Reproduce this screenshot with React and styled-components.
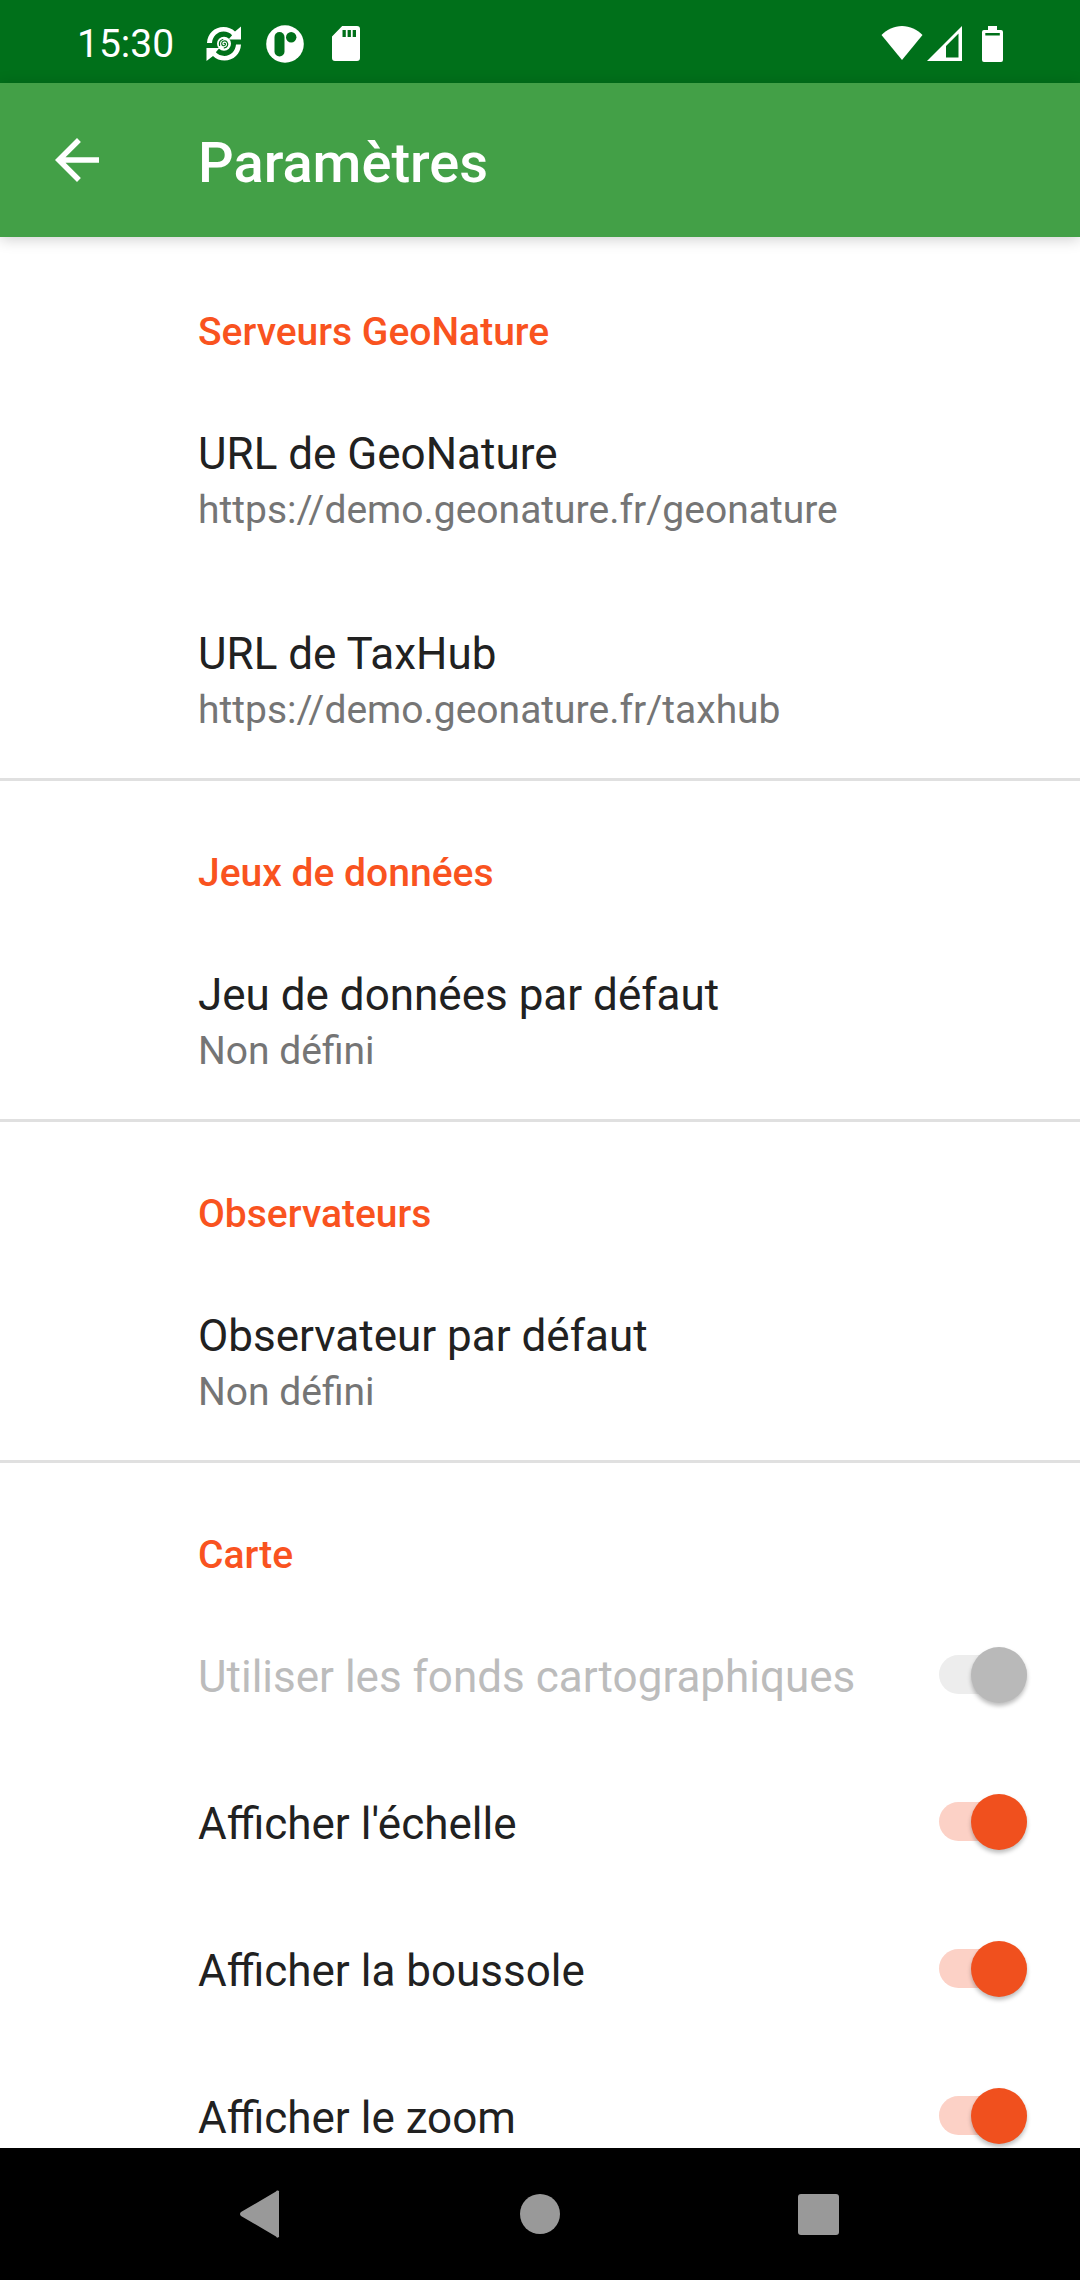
import React from "react";
import styled, { createGlobalStyle } from "styled-components";

const GlobalStyle = createGlobalStyle`
  * { box-sizing: border-box; }
  body { margin: 0; background: #fff; }
  button, input { font: inherit; margin: 0; }
`;

const Screen = styled.div`
  display: flex;
  flex-direction: column;
  height: 100vh;
  font-family: Roboto, "Liberation Sans", sans-serif;
  color: #212121;
`;

const StatusBar = styled.div`
  display: flex;
  flex: none;
  align-items: center;
  justify-content: space-between;
  height: 83px;
  padding: 4px 77px 0 77px;
  background: #00701a;
  color: #fff;
`;

const StatusGroup = styled.div`
  display: flex;
  align-items: center;
  gap: ${(p) => p.$gap};
`;

const Clock = styled.time`
  font-size: 39px;
  line-height: 46px;
  margin-right: 8px;
`;

const StatusIcon = styled.svg`
  display: block;
  fill: #fff;
`;

const AppBar = styled.header`
  display: flex;
  flex: none;
  align-items: center;
  height: 154px;
  padding: 0 44px;
  background: #43a047;
  color: #fff;
  box-shadow: 0 2px 14px rgba(0, 0, 0, 0.2);
`;

const BackButton = styled.button`
  width: 66px;
  height: 66px;
  padding: 0;
  border: 0;
  background: none;
  color: inherit;
`;

const Title = styled.h1`
  margin: 0 0 0 88px;
  padding-top: 6px;
  font-size: 56px;
  line-height: 64px;
  font-weight: 500;
`;

const Content = styled.main`
  flex: 1;
  min-height: 0;
  overflow-y: auto;
  scrollbar-width: none;
`;

const Section = styled.section`
  & + & { box-shadow: inset 0 3px #e0e0e0; }
`;

const SectionTitle = styled.h2`
  margin: 0;
  padding: 69px 44px 19px 198px;
  font-size: 39px;
  line-height: 53px;
  font-weight: 500;
  color: #f9531f;
`;

const Preference = styled.button`
  display: block;
  width: 100%;
  padding: 47px 44px 41px 198px;
  border: 0;
  background: none;
  color: inherit;
  text-align: left;
`;

const SwitchPreference = styled.label`
  display: flex;
  align-items: center;
  justify-content: space-between;
  padding: 0 53px 0 198px;
  color: ${(p) => (p.$disabled ? "#bcbcbc" : "inherit")};
`;

const Name = styled.span`
  display: block;
  font-size: 44px;
  line-height: 59px;

  ${SwitchPreference} & { padding: 47px 0 41px; }
`;

const Summary = styled.span`
  display: block;
  font-size: 39px;
  line-height: 53px;
  color: #757575;
`;

const Switch = styled.input`
  appearance: none;
  display: grid;
  flex: none;
  grid-template-rows: 39px;
  align-items: center;
  justify-content: start;
  width: 88px;
  height: 39px;
  border-radius: 20px;
  background: #e0e0e0;

  &::before {
    content: "";
    width: 56px;
    height: 56px;
    border-radius: 50%;
    background: #fafafa;
    box-shadow: 0 3px 4px rgba(0, 0, 0, 0.26);
  }
  &:checked { justify-content: end; background: #fcd1c6; }
  &:checked::before { background: #f0501e; }
  &:disabled { background: #ededed; }
  &:disabled::before { background: #b9b9b9; }
`;

const NavBar = styled.nav`
  display: flex;
  flex: none;
  justify-content: center;
  height: 132px;
  background: #000;
`;

const NavButton = styled.button`
  display: grid;
  place-items: center;
  width: 278px;
  padding: 0;
  border: 0;
  background: none;
`;

const groups = [
  {
    title: "Serveurs GeoNature",
    items: [
      { name: "URL de GeoNature", summary: "https://demo.geonature.fr/geonature" },
      { name: "URL de TaxHub", summary: "https://demo.geonature.fr/taxhub" },
    ],
  },
  {
    title: "Jeux de données",
    items: [{ name: "Jeu de données par défaut", summary: "Non défini" }],
  },
  {
    title: "Observateurs",
    items: [{ name: "Observateur par défaut", summary: "Non défini" }],
  },
  {
    title: "Carte",
    items: [
      { name: "Utiliser les fonds cartographiques", disabled: true },
      { name: "Afficher l'échelle" },
      { name: "Afficher la boussole" },
      { name: "Afficher le zoom" },
    ],
  },
];

function SyncIcon() {
  return (
    <StatusIcon width="36" height="36" viewBox="0 0 36 36" aria-hidden="true">
      <path d="M1 17C1.500 7.500 8.500 1 17.500 1c4.500 0 8.500 1.600 11.500 4.600L35 0.500V13.500H22.500l3.600-4.300C24 7 21 5.600 17.600 5.600 11.400 5.600 6.500 10.500 6 17z" />
      <path d="M35 18.500C34.500 28 27.500 34.500 18.500 34.500c-4.500 0-8.500-1.600-11.500-4.600L0.500 35V22H13.500l-3.700 4.300c2.200 2.300 5.200 3.600 8.600 3.600 6.200 0 11.100-4.900 11.600-11.400z" />
      <circle cx="18" cy="17.700" r="7" />
      <path d="M18.200 17.500c.8-.8 1.800.4 1 1.500-1 1.400-3.600.7-3.500-1.500.1-2.600 3.600-3.600 5.300-1.400 1.700 2.400.2 5.600-2.700 5.800M13.600 19.500c-.6-2.800.8-5.300 3.200-6" fill="none" stroke="#00701a" strokeWidth="1.200" strokeLinecap="round" />
    </StatusIcon>
  );
}

function ParkingIcon() {
  return (
    <StatusIcon width="38" height="38" viewBox="0 0 38 38" aria-hidden="true">
      <circle cx="19" cy="19" r="18.800" />
      <rect x="8.500" y="7" width="10" height="24.500" rx="5" fill="#00701a" />
      <circle cx="25.200" cy="12.200" r="5.200" fill="#00701a" />
    </StatusIcon>
  );
}

function SdCardIcon() {
  return (
    <StatusIcon width="36" height="35" viewBox="-4 0 36 35" aria-hidden="true">
      <path
        fillRule="evenodd"
        d="M10.200 0H25a3 3 0 0 1 3 3v29a3 3 0 0 1-3 3H3a3 3 0 0 1-3-3V10.500zM10.500 4v7h3.300V4zm5.100 0v7h3.300V4zm5.100 0v7H24V4z"
      />
    </StatusIcon>
  );
}

function App() {
  return (
    <Screen>
      <GlobalStyle />
      <StatusBar>
        <StatusGroup $gap="24px">
          <Clock>15:30</Clock>
          <SyncIcon />
          <ParkingIcon />
          <SdCardIcon />
        </StatusGroup>
        <StatusGroup $gap="4px">
          <StatusIcon width="42" height="36" viewBox="0 0 42 36" aria-hidden="true">
            <path d="M21 34 0.500 9C6 3.500 13 0 21 0s15 3.500 20.500 9z" />
          </StatusIcon>
          <StatusIcon width="35" height="36" viewBox="0 0 35 36" aria-hidden="true">
            <path fillRule="evenodd" d="M0 35 35 0v35zM19 20v11.500h12.500V7.500z" />
          </StatusIcon>
          <StatusIcon width="37" height="36" viewBox="4 0 37 36" aria-hidden="true">
            <path
              fillRule="evenodd"
              d="M26 0h9v4h4a2 2 0 0 1 2 2v28a2 2 0 0 1-2 2H22a2 2 0 0 1-2-2V6a2 2 0 0 1 2-2h4zM23.300 7v2.500h14.500V7z"
            />
          </StatusIcon>
        </StatusGroup>
      </StatusBar>

      <AppBar>
        <BackButton aria-label="Retour">
          <svg width="66" height="66" viewBox="0 0 24 24" fill="currentColor" aria-hidden="true">
            <path d="M20 11H7.830l5.590-5.590L12 4l-8 8 8 8 1.410-1.410L7.830 13H20v-2z" />
          </svg>
        </BackButton>
        <Title>Paramètres</Title>
      </AppBar>

      <Content>
        {groups.map((group) => (
          <Section key={group.title}>
            <SectionTitle>{group.title}</SectionTitle>
            {group.items.map((item) =>
              item.summary ? (
                <Preference key={item.name}>
                  <Name>{item.name}</Name>
                  <Summary>{item.summary}</Summary>
                </Preference>
              ) : (
                <SwitchPreference key={item.name} $disabled={item.disabled}>
                  <Name>{item.name}</Name>
                  <Switch type="checkbox" defaultChecked disabled={item.disabled} />
                </SwitchPreference>
              )
            )}
          </Section>
        ))}
      </Content>

      <NavBar>
        <NavButton aria-label="Précédent">
          <svg width="48" height="48" viewBox="0 0 48 48" fill="#999" aria-hidden="true">
            <path d="M41 2.500a1.500 1.500 0 0 0-3-1L3 22q-2 2 0 4l35 20.500a1.500 1.500 0 0 0 3-1z" />
          </svg>
        </NavButton>
        <NavButton aria-label="Accueil">
          <svg width="40" height="40" viewBox="0 0 40 40" fill="#999" aria-hidden="true">
            <circle cx="20" cy="20" r="20" />
          </svg>
        </NavButton>
        <NavButton aria-label="Applications récentes">
          <svg width="41" height="41" viewBox="0 0 41 41" fill="#999" aria-hidden="true">
            <rect width="41" height="41" rx="3" />
          </svg>
        </NavButton>
      </NavBar>
    </Screen>
  );
}

export default App;
